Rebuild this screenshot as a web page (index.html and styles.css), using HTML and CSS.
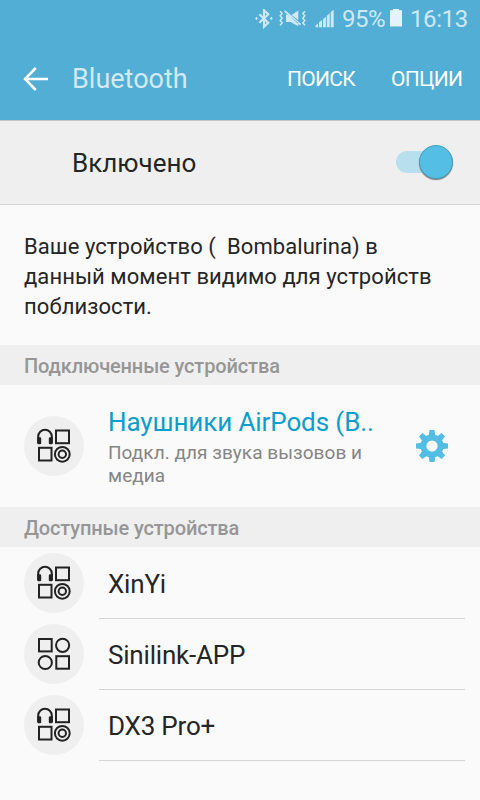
FILE: index.html
```html
<!DOCTYPE html>
<html lang="ru">
<head>
<meta charset="utf-8">
<title>Bluetooth</title>
<link rel="stylesheet" href="styles.css">
</head>
<body>
<svg width="0" height="0" class="defs">
  <symbol id="audio" viewBox="0 0 60 60">
    <g fill="none" stroke="#222" stroke-width="2">
      <path d="M14.2 27V20.5a6.8 6.8 0 0 1 13.6 0V27"/>
      <rect x="32" y="14.5" width="13" height="12.7"/>
      <rect x="15" y="31.8" width="12.5" height="12.7"/>
      <circle cx="38.3" cy="38.3" r="7.4"/>
      <circle cx="38.3" cy="38.3" r="3.7"/>
    </g>
    <path fill="#222" d="M13.2 21.3h2.8a1.2 1.2 0 0 1 1.2 1.2v4.6a1.2 1.2 0 0 1-1.2 1.2h-1.6a1.2 1.2 0 0 1-1.2-1.2zM28.8 21.3H26a1.2 1.2 0 0 0-1.2 1.2v4.6a1.2 1.2 0 0 0 1.2 1.2h1.6a1.2 1.2 0 0 0 1.2-1.2z"/>
  </symbol>
  <symbol id="generic" viewBox="0 0 60 60">
    <g fill="none" stroke="#222" stroke-width="2">
      <rect x="15" y="15" width="12.7" height="12.4"/>
      <circle cx="38.6" cy="21.3" r="6.6"/>
      <circle cx="21.3" cy="38.5" r="6.6"/>
      <rect x="32.3" y="32.2" width="12.7" height="12.5"/>
    </g>
  </symbol>
</svg>
<header>
  <div class="status">
    <svg width="18" height="20" viewBox="0 0 18 20"><path d="M4.3 5.3l9 8.5-4.3 4V1.2l4.3 4-9 8.5" fill="none" stroke="currentColor" stroke-width="2.1"/><path d="M1.5 7.8l1.5 1.6-1.5 1.6L0 9.4zM16.3 7.8l1.5 1.6-1.5 1.6-1.5-1.6z" fill="currentColor"/></svg>
    <svg class="mute" width="28" height="20" viewBox="0 0 28 20"><path d="M1 2.2l2.2 2.3-2 2.3 2 2.4-2 2.4 2 2.3L1 16.2M26 2.2l-2.2 2.3 2 2.3-2 2.4 2 2.4-2 2.3 2.2 2.3" fill="none" stroke="currentColor" stroke-width="1.5"/><path d="M7 6v7h4.6l7.7 4.3v-3.6L7.8 5.3zM12.5 6l6.8-4.6v9.7zM5 2.5l1.2-1.2 16 13.7-1.2 1.3z" fill="currentColor"/></svg>
    <svg class="signal" width="20" height="20" viewBox="0 0 20 20"><path d="M.5 18.2v-1.8L3 14.5v3.7zM4 18.2v-4.9L7 11v7.2zM8 18.2v-8l2.9-2.5v10.5zM11.8 18.2V6.8l2.9-2.3v13.7zM15.7 18.2V3.3L18.7.8v17.4z" fill="currentColor"/></svg>
    <span class="percent">95%</span>
    <svg class="battery" width="12" height="20" viewBox="0 0 12 20"><path d="M0 17.5V1.2h3V0h6v1.2h3v16.3z" fill="#e4f3f9"/></svg>
    <span class="time">16:13</span>
  </div>
  <div class="bar">
    <svg class="back" width="26" height="26" viewBox="0 0 26 26"><path d="M12.8 2L2 13l10.8 11M2.6 13H25" fill="none" stroke="#fff" stroke-width="2.5"/></svg>
    <h1>Bluetooth</h1>
    <span class="search">ПОИСК</span>
    <span class="options">ОПЦИИ</span>
  </div>
</header>
<div class="power"><span>Включено</span><div class="switch"><i></i></div></div>
<p class="info">Ваше устройство ( &nbsp;Bombalurina) в<br>данный момент видимо для устройств<br>поблизости.</p>
<h2>Подключенные устройства</h2>
<div class="connected">
  <svg class="icon"><use href="#audio"/></svg>
  <div class="details"><div class="name">Наушники AirPods (B..</div><div class="sub">Подкл. для звука вызовов и<br>медиа</div></div>
  <svg class="gear" width="32" height="32" viewBox="-16 -16 32 32">
    <g fill="#54bde4">
      <g id="teeth"><path id="tooth" d="M-3.3-10l.8-6h5l.8 6zM-3.3 10l.8 6h5l.8-6z"/><use href="#tooth" transform="rotate(90)"/></g>
      <use href="#teeth" transform="rotate(45)"/>
    </g>
    <circle r="8.6" fill="none" stroke="#54bde4" stroke-width="6"/>
  </svg>
</div>
<h2>Доступные устройства</h2>
<div class="row"><svg class="icon"><use href="#audio"/></svg><div class="device">XinYi</div></div>
<div class="row"><svg class="icon"><use href="#generic"/></svg><div class="device">Sinilink-APP</div></div>
<div class="row"><svg class="icon"><use href="#audio"/></svg><div class="device">DX3 Pro+</div></div>
</body>
</html>
```
FILE: styles.css
```css
* { box-sizing: border-box; }
body { margin: 0; width: 480px; height: 800px; overflow: hidden; background: #fafafa; color: #252525; font-family: Roboto, "Noto Sans", sans-serif; }
.defs { position: absolute; }
svg { flex: none; display: block; }
header { height: 120px; background: #52aed5; }
.status { height: 38px; display: flex; align-items: center; padding-left: 255px; color: #cee9f4; font-size: 24px; line-height: 38px; white-space: nowrap; }
.mute { margin-left: 6px; }
.signal { margin-left: 8px; }
.percent { width: 44px; margin-left: 7px; letter-spacing: -0.5px; }
.battery { margin: 0 0 1px 4px; }
.time { margin-left: 8px; letter-spacing: -0.4px; }
.bar { height: 82px; display: flex; align-items: center; padding-left: 23px; color: #fff; }
h1 { margin: 0 0 0 23px; width: 215px; font-size: 27px; font-weight: 400; color: #d1eaf4; }
.search, .options { font-size: 21px; letter-spacing: -0.7px; }
.search { width: 104px; }
.power { height: 85px; display: flex; align-items: center; justify-content: space-between; padding: 0 27px 0 72px; background: #efefef; border-top: 1px solid #c2c4c5; border-bottom: 1px solid #d5d5d5; font-size: 26px; }
.switch { display: flex; align-items: center; width: 57px; height: 22px; border-radius: 11px; background: #b8dfed; justify-content: flex-end; margin-bottom: 2px; }
.switch i { width: 34px; height: 34px; border-radius: 50%; background: #55bee4; border: 1px solid #4c9ebb; box-shadow: 0 1px 1px #777; }
.info { margin: 0; height: 140px; padding: 27px 0 0 24px; font-size: 22px; line-height: 30px; letter-spacing: 0.07px; white-space: nowrap; }
h2 { margin: 0; height: 40px; padding: 1px 0 0 24px; background: #efefef; color: #969696; font-size: 20px; line-height: 40px; font-weight: 500; letter-spacing: -0.13px; }
.connected { height: 122px; display: flex; align-items: center; padding-left: 24px; }
.icon { width: 60px; height: 60px; border-radius: 50%; background: #efefef; }
.details { width: 332px; padding-left: 24px; white-space: nowrap; }
.name { font-size: 26px; line-height: 34px; letter-spacing: -0.1px; color: #0b9dcc; }
.sub { padding-top: 2px; font-size: 19px; line-height: 23px; letter-spacing: 0.05px; color: #858585; }
.row { height: 71px; display: flex; align-items: center; padding-left: 24px; }
.row .icon { margin-bottom: -1px; margin-top: -1px; }
.device { width: 366px; height: 72px; margin-left: 15px; padding: 3px 0 0 9px; border-bottom: 1px solid #d5d5d5; font-size: 26px; line-height: 69px; letter-spacing: -0.2px; }
```
